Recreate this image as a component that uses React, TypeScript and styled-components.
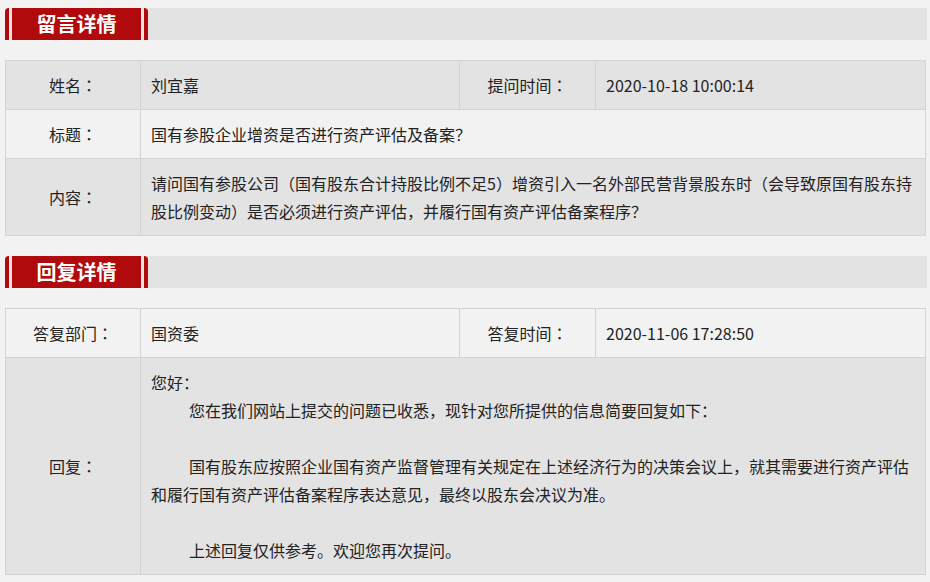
import { createGlobalStyle, styled } from 'styled-components';

const GlobalStyle = createGlobalStyle`
  html, body {
    margin: 0;
    padding: 0;
    background: #f2f2f2;
  }

  body {
    font-family: "Microsoft YaHei", "Noto Sans CJK SC", "Liberation Sans", sans-serif;
    color: #222;
  }
`;

const Page = styled.div`
  padding: 8px 3px 0 5px;
  display: flex;
  flex-direction: column;
  gap: 20px;
`;

const Section = styled.section`
  display: flex;
  flex-direction: column;
  gap: 20px;
`;

const TitleBar = styled.div`
  display: flex;
  height: 32px;
  width: 922px;
  background: #e3e3e3;
`;

const TabCap = styled.span<{ $side: 'left' | 'right' }>`
  width: 4px;
  background: #b10a0c;
  border-top-${(p) => p.$side}-radius: 4px;
`;

const TabGap = styled.span`
  width: 3px;
  background: #efe4e4;
`;

const TabMain = styled.h2`
  margin: 0;
  width: 129px;
  background: #b10a0c;
  color: #fff;
  font-size: 20px;
  font-weight: bold;
  line-height: 32px;
  text-align: center;
`;

const Table = styled.table`
  width: 921px;
  border-collapse: collapse;
  table-layout: fixed;
  font-size: 16px;
  line-height: 28px;
`;

const Row = styled.tr<{ $shade?: boolean }>`
  background: ${(p) => (p.$shade ? '#e3e3e3' : '#f2f2f2')};
`;

const Label = styled.th`
  border: 1px solid #d3d3d3;
  padding: 10px 0;
  font-weight: normal;
  text-align: center;
`;

// 冒号居中显示
const Colon = styled.span`
  font-family: "Noto Sans CJK TC", "Noto Sans CJK SC", sans-serif;
`;

const Value = styled.td`
  border: 1px solid #d3d3d3;
  padding: 10px 10px;
  text-align: left;
`;

const Para = styled.p<{ $indent?: boolean }>`
  margin: 0;
  min-height: 28px;
  text-indent: ${(p) => (p.$indent ? '38px' : '0')};
`;

function SectionTitle({ children }: { children: string }) {
  return (
    <TitleBar>
      <TabCap $side="left" />
      <TabGap />
      <TabMain>{children}</TabMain>
      <TabGap />
      <TabCap $side="right" />
    </TitleBar>
  );
}

function Cell({ children }: { children: string }) {
  return (
    <Label>
      {children}
      <Colon>：</Colon>
    </Label>
  );
}

function Columns() {
  return (
    <colgroup>
      <col style={{ width: 135 }} />
      <col style={{ width: 319 }} />
      <col style={{ width: 136 }} />
      <col />
    </colgroup>
  );
}

const replyLines = [
  { text: '您好：', indent: false },
  { text: '您在我们网站上提交的问题已收悉，现针对您所提供的信息简要回复如下：', indent: true },
  { text: '', indent: false },
  {
    text: '国有股东应按照企业国有资产监督管理有关规定在上述经济行为的决策会议上，就其需要进行资产评估和履行国有资产评估备案程序表达意见，最终以股东会决议为准。',
    indent: true,
  },
  { text: '', indent: false },
  { text: '上述回复仅供参考。欢迎您再次提问。', indent: true },
];

export default function App() {
  return (
    <>
      <GlobalStyle />
      <Page>
        <Section>
          <SectionTitle>留言详情</SectionTitle>
          <Table>
            <Columns />
            <tbody>
              <Row $shade>
                <Cell>姓名</Cell>
                <Value>刘宜嘉</Value>
                <Cell>提问时间</Cell>
                <Value>2020-10-18 10:00:14</Value>
              </Row>
              <Row>
                <Cell>标题</Cell>
                <Value colSpan={3}>国有参股企业增资是否进行资产评估及备案？</Value>
              </Row>
              <Row $shade>
                <Cell>内容</Cell>
                <Value colSpan={3}>
                  请问国有参股公司（国有股东合计持股比例不足5）增资引入一名外部民营背景股东时（会导致原国有股东持股比例变动）是否必须进行资产评估，并履行国有资产评估备案程序？
                </Value>
              </Row>
            </tbody>
          </Table>
        </Section>
        <Section>
          <SectionTitle>回复详情</SectionTitle>
          <Table>
            <Columns />
            <tbody>
              <Row>
                <Cell>答复部门</Cell>
                <Value>国资委</Value>
                <Cell>答复时间</Cell>
                <Value>2020-11-06 17:28:50</Value>
              </Row>
              <Row $shade>
                <Cell>回复</Cell>
                <Value colSpan={3}>
                  {replyLines.map((line, i) => (
                    <Para key={i} $indent={line.indent}>
                      {line.text}
                    </Para>
                  ))}
                </Value>
              </Row>
            </tbody>
          </Table>
        </Section>
      </Page>
    </>
  );
}
